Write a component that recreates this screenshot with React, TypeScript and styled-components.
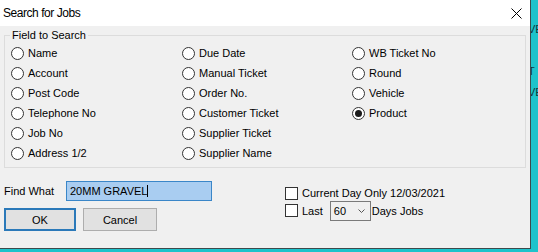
import React from 'react'
import styled, { createGlobalStyle } from 'styled-components'

const GlobalStyle = createGlobalStyle`
  html, body {
    margin: 0;
    padding: 0;
  }
  body {
    width: 538px;
    height: 252px;
    overflow: hidden;
    background: #1ec3cb;
    font-family: "Liberation Sans", Arial, sans-serif;
    font-size: 11px;
    color: #000;
  }
`

const Screen = styled.div`
  display: flex;
  width: 538px;
  height: 252px;
  background: #1ec3cb;
`

const Window = styled.div`
  width: 530px;
  height: 248px;
  flex-shrink: 0;
  display: flex;
  flex-direction: column;
  background: #f0f0f0;
  border-right: 1px solid #3d4a4c;
  border-bottom: 1px solid #3d4a4c;
`

const TitleBar = styled.div`
  height: 26px;
  box-sizing: border-box;
  display: flex;
  align-items: center;
  justify-content: space-between;
  padding: 0 8px 0 3px;
  background: #fff;
`

const Title = styled.span`
  font-size: 12px;
  letter-spacing: -0.45px;
`

const Body = styled.div`
  padding: 9px 4px 0 4px;
`

const Group = styled.div`
  position: relative;
  width: 522px;
  height: 133px;
  box-sizing: border-box;
  border: 1px solid #dcdcdc;
  padding: 7px 0 0 6px;
`

const Legend = styled.span`
  position: absolute;
  top: -7px;
  left: 5px;
  padding: 0 2px;
  line-height: 13px;
  background: #f0f0f0;
`

const RadioGrid = styled.div`
  display: grid;
  grid-template-columns: 171px 170px auto;
  grid-template-rows: repeat(6, 20px);
  grid-auto-flow: column;
`

const RadioItem = styled.label`
  display: flex;
  align-items: center;
  gap: 4px;
`

const RadioCircle = styled.span<{ $checked?: boolean }>`
  width: 13px;
  height: 13px;
  box-sizing: border-box;
  border: 1px solid #333;
  border-radius: 50%;
  background: #fff;
  display: flex;
  align-items: center;
  justify-content: center;
  &::after {
    content: '';
    width: 7px;
    height: 7px;
    border-radius: 50%;
    background: #1a1a1a;
    display: ${p => (p.$checked ? 'block' : 'none')};
  }
`

const Bottom = styled.div`
  display: flex;
  margin-top: 13px;
`

const LeftCol = styled.div`
  width: 281px;
`

const FindRow = styled.div`
  display: flex;
  align-items: center;
  height: 20px;
`

const FindLabel = styled.span`
  width: 62px;
`

const TextBox = styled.div`
  width: 146px;
  height: 20px;
  box-sizing: border-box;
  display: flex;
  align-items: center;
  padding: 0 3px;
  border: 1px solid #3a86c8;
  background: #a9cdf1;
`

const Caret = styled.span`
  width: 1px;
  height: 12px;
  background: #000;
`

const ButtonRow = styled.div`
  display: flex;
  gap: 7px;
  margin-top: 7px;
`

const DlgButton = styled.button<{ $default?: boolean; $w: number }>`
  width: ${p => p.$w}px;
  height: 23px;
  box-sizing: border-box;
  padding: 0;
  font-family: inherit;
  font-size: 11px;
  color: #000;
  background: #e1e1e1;
  border: ${p => (p.$default ? '2px solid #2b79b9' : '1px solid #adadad')};
`

const RightCol = styled.div`
  display: flex;
  flex-direction: column;
  padding-top: 5px;
`

const CheckRow = styled.div<{ $h: number }>`
  display: flex;
  align-items: center;
  height: ${p => p.$h}px;
`

const CheckBox = styled.span`
  width: 13px;
  height: 13px;
  box-sizing: border-box;
  border: 1px solid #333;
  background: #fff;
  margin-right: 4px;
`

const Combo = styled.div`
  width: 41px;
  height: 20px;
  box-sizing: border-box;
  display: flex;
  align-items: center;
  justify-content: space-between;
  padding: 0 5px 0 3px;
  margin: 0 1px 0 7px;
  border: 1px solid #7a7a7a;
  background: #f0f0f0;
`

const Strip = styled.div`
  width: 7px;
  overflow: hidden;
  padding-top: 23px;
  color: #10393d;
  font-size: 11px;
`

const StripLine = styled.div`
  height: 21px;
  margin-left: -3px;
  white-space: nowrap;
`

const fields: { label: string; checked?: boolean }[] = [
  { label: 'Name' },
  { label: 'Account' },
  { label: 'Post Code' },
  { label: 'Telephone No' },
  { label: 'Job No' },
  { label: 'Address 1/2' },
  { label: 'Due Date' },
  { label: 'Manual Ticket' },
  { label: 'Order No.' },
  { label: 'Customer Ticket' },
  { label: 'Supplier Ticket' },
  { label: 'Supplier Name' },
  { label: 'WB Ticket No' },
  { label: 'Round' },
  { label: 'Vehicle' },
  { label: 'Product', checked: true },
]

//----------------------------------------------------------------------------------------------
// App
//----------------------------------------------------------------------------------------------
const App: React.FC = () => {
  return (
    <>
      <GlobalStyle />
      <Screen>
        <Window>
          <TitleBar>
            <Title>Search for Jobs</Title>
            <svg width="11" height="11" viewBox="0 0 11 11">
              <path d="M0.5 0.5 L10.5 10.5 M10.5 0.5 L0.5 10.5" stroke="#000" strokeWidth="1" fill="none" />
            </svg>
          </TitleBar>
          <Body>
            <Group>
              <Legend>Field to Search</Legend>
              <RadioGrid>
                {fields.map(f => (
                  <RadioItem key={f.label}>
                    <RadioCircle $checked={f.checked} />
                    {f.label}
                  </RadioItem>
                ))}
              </RadioGrid>
            </Group>
            <Bottom>
              <LeftCol>
                <FindRow>
                  <FindLabel>Find What</FindLabel>
                  <TextBox>
                    20MM GRAVEL<Caret />
                  </TextBox>
                </FindRow>
                <ButtonRow>
                  <DlgButton $default $w={72}>OK</DlgButton>
                  <DlgButton $w={74}>Cancel</DlgButton>
                </ButtonRow>
              </LeftCol>
              <RightCol>
                <CheckRow $h={14}>
                  <CheckBox />
                  Current Day Only 12/03/2021
                </CheckRow>
                <CheckRow $h={21}>
                  <CheckBox />
                  Last
                  <Combo>
                    60
                    <svg width="7" height="4" viewBox="0 0 7 4">
                      <path d="M0.5 0.5 L3.5 3.5 L6.5 0.5" stroke="#555" strokeWidth="1" fill="none" />
                    </svg>
                  </Combo>
                  Days Jobs
                </CheckRow>
              </RightCol>
            </Bottom>
          </Body>
        </Window>
        <Strip>
          <StripLine>VE</StripLine>
          <StripLine />
          <StripLine>T</StripLine>
          <StripLine>VE</StripLine>
        </Strip>
      </Screen>
    </>
  )
}

export default App
